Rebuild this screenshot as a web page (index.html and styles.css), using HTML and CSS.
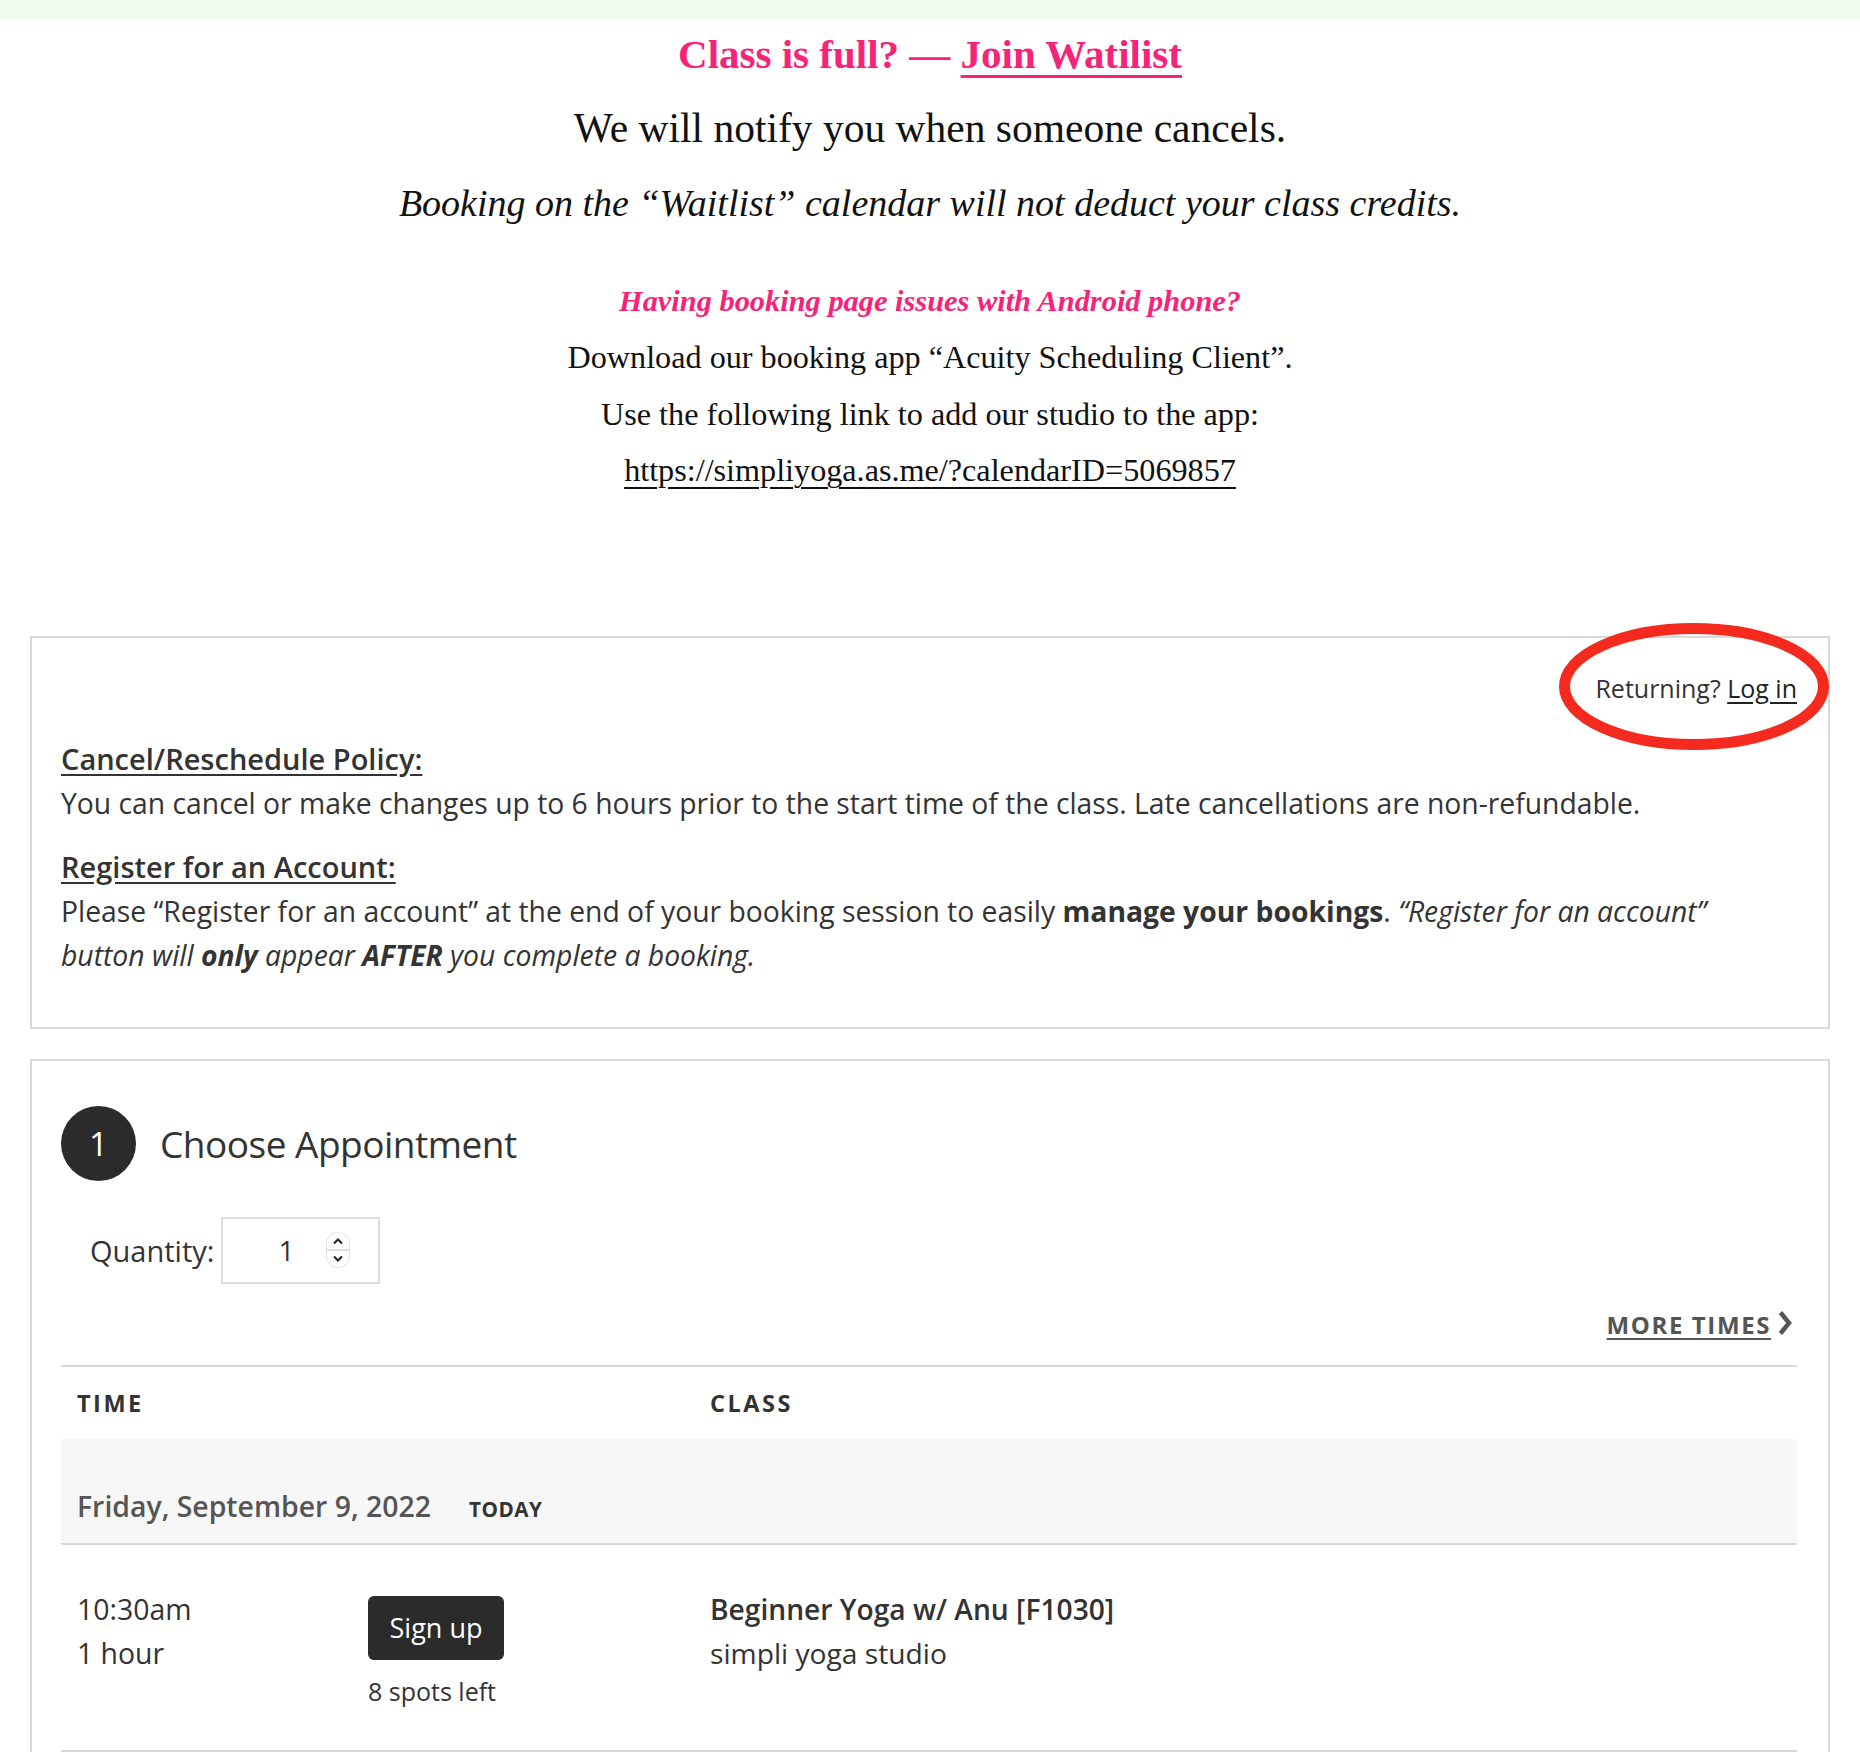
FILE: index.html
```html
<!DOCTYPE html>
<html lang="en">
<head>
<meta charset="utf-8">
<title>Simpli Yoga – Booking</title>
<link rel="stylesheet" href="styles.css">
</head>
<body>
<div class="topband"></div>
<header class="notice">
  <h1 class="full">Class is full? — <a href="#">Join Watilist</a></h1>
  <p class="notify">We will notify you when someone cancels.</p>
  <p class="credits">Booking on the “Waitlist” calendar will not deduct your class credits.</p>
  <p class="android">Having booking page issues with Android phone?</p>
  <p class="app">Download our booking app “Acuity Scheduling Client”.</p>
  <p class="app">Use the following link to add our studio to the app:</p>
  <p class="app"><a href="#">https://simpliyoga.as.me/?calendarID=5069857</a></p>
</header>

<section class="panel intro">
  <div class="returning">Returning? <a href="#">Log in</a>
    <svg class="ring" width="270" height="127" viewBox="0 0 270 127"><ellipse cx="135" cy="63.5" rx="129.5" ry="58" fill="none" stroke="#f42a1e" stroke-width="11"/></svg>
  </div>
  <h3 class="policy-title">Cancel/Reschedule Policy:</h3>
  <p class="policy-text">You can cancel or make changes up to 6 hours prior to the start time of the class. Late cancellations are non-refundable.</p>
  <h3 class="policy-title second">Register for an Account:</h3>
  <p class="policy-text">Please “Register for an account” at the end of your booking session to easily <b class="bold">manage your bookings</b>. <i class="it">“Register for an account”</i> <i class="it">button will</i> <b class="bold-it">only</b> <i class="it">appear</i> <b class="bold-it">AFTER</b> <i class="it">you complete a booking.</i></p>
</section>

<section class="panel step">
  <div class="step-head">
    <span class="step-num">1</span>
    <h2 class="step-title">Choose Appointment</h2>
  </div>
  <div class="qty">
    <label class="qty-label">Quantity:</label>
    <div class="qty-box">
      <span class="qty-val">1</span>
      <span class="spinner">
        <svg width="24" height="36" viewBox="0 0 24 36"><rect x="0.5" y="0.5" width="23" height="35" rx="11" fill="#fff" stroke="#e2e2e2"/><line x1="1" y1="18" x2="23" y2="18" stroke="#d6d6d6" stroke-width="1.5"/><path d="M8 11.5 L12 7.5 L16 11.5" fill="none" stroke="#222" stroke-width="2"/><path d="M8 24.5 L12 28.5 L16 24.5" fill="none" stroke="#222" stroke-width="2"/></svg>
      </span>
    </div>
  </div>
  <div class="more-row">
    <a class="more" href="#">MORE TIMES</a>
    <svg class="chev" width="16" height="26" viewBox="0 0 16 26"><path d="M3.5 2.5 L12 13 L3.5 23.5" fill="none" stroke="#555" stroke-width="4.5"/></svg>
  </div>
  <div class="table">
    <div class="thead">
      <div class="th th-time">TIME</div>
      <div class="th th-class">CLASS</div>
    </div>
    <div class="day">
      <span class="day-date">Friday, September 9, 2022</span>
      <span class="day-today">TODAY</span>
    </div>
    <div class="row">
      <div class="cell-time">
        <div class="time">10:30am<br>1 hour</div>
        <div class="signup">
          <button class="btn">Sign up</button>
          <div class="spots">8 spots left</div>
        </div>
      </div>
      <div class="cell-class">
        <div class="class-name">Beginner Yoga w/ Anu [F1030]</div>
        <div class="class-loc">simpli yoga studio</div>
      </div>
    </div>
  </div>
</section>
</body>
</html>
```

FILE: styles.css
```css
* { box-sizing: border-box; }
html, body { margin: 0; padding: 0; background: #fff; }
body { font-family: "Open Sans", "Liberation Sans", sans-serif; color: #333; }

.topband { height: 19px; background: #edfcee; }

.notice { text-align: center; font-family: "Liberation Serif", serif; color: #111; }
.notice p, .notice h1 { margin: 0; }
.full { font-size: 41px; line-height: 70px; margin-top: 6px; color: #f72379; font-weight: bold; }
.full a { color: #f72379; text-decoration: underline; text-decoration-thickness: 3px; text-underline-offset: 7px; }
.notice .notify { font-size: 41.5px; line-height: 60px; margin-top: 9px; }
.notice .credits { font-size: 38px; line-height: 60px; margin-top: 15px; font-style: italic; }
.notice .android { font-size: 30.4px; line-height: 56px; margin-top: 40px; font-style: italic; font-weight: bold; color: #f72379; }
.notice .app { font-size: 32.2px; line-height: 56.5px; }
.notice .app a { color: #111; text-decoration: underline; text-decoration-thickness: 2px; text-underline-offset: 6px; }

.panel { margin: 0 30px; border: 2px solid #d9d9d9; }
.intro { margin-top: 137px; padding: 30px 31px 50px 29px; }
.returning { position: relative; text-align: right; font-size: 25px; line-height: 40px; color: #333; }
.returning a { color: #222; text-decoration: underline; text-underline-offset: 4px; }
.ring { position: absolute; right: -32px; top: -45px; pointer-events: none; }

.policy-title { margin: 29px 0 0; font-size: 29px; line-height: 44px; font-weight: 600; color: #333; text-decoration: underline; text-underline-offset: 4px; }
.policy-title.second { margin-top: 20px; }
.policy-text { margin: 0; font-size: 28.3px; line-height: 44px; color: #333; }
.policy-text .bold { font-weight: 700; }
.policy-text .it { font-style: italic; }
.policy-text .bold-it { font-weight: 700; font-style: italic; }

.step { margin-top: 30px; padding: 45px 31px 0 29px; border-bottom: none; }
.step-head { display: flex; align-items: center; gap: 24px; }
.step-num { width: 75px; height: 75px; border-radius: 50%; background: #2b2b2b; color: #fff; display: flex; align-items: center; justify-content: center; font-size: 33px; }
.step-title { margin: 0; font-size: 37px; font-weight: 400; color: #333; letter-spacing: -0.5px; }

.qty { display: flex; align-items: center; margin-top: 36px; padding-left: 29px; gap: 7px; }
.qty-label { font-size: 29px; color: #333; }
.qty-box { width: 159px; height: 67px; border: 2px solid #dcdcdc; display: flex; align-items: center; padding-left: 55px; gap: 32px; }
.qty-val { font-size: 28px; color: #333; }
.spinner { display: flex; }

.more-row { display: flex; justify-content: flex-end; align-items: center; gap: 6px; margin-top: 24px; padding-right: 4px; }
.more { font-size: 24px; font-weight: 700; letter-spacing: 1.6px; color: #555; text-decoration: underline; text-underline-offset: 4px; line-height: 34px; }
.chev { margin-bottom: 4px; }

.table { margin-top: 23px; border-top: 2px solid #d8d8d8; }
.thead { display: flex; height: 72px; align-items: center; }
.th { font-size: 23.5px; font-weight: 700; letter-spacing: 2.5px; color: #333; padding-left: 16px; }
.th-time { width: 633px; }
.day { background: #f7f7f7; padding: 46px 16px 16px; border-bottom: 2px solid #d8d8d8; display: flex; align-items: baseline; gap: 38px; }
.day-date { font-size: 28.4px; font-weight: 600; color: #555; line-height: 42px; }
.day-today { font-size: 20.7px; font-weight: 700; color: #333; letter-spacing: 0.5px; }

.row { display: flex; padding: 42px 0 42px; border-bottom: 2px solid #d8d8d8; }
.cell-time { width: 633px; display: flex; padding-left: 16px; }
.time { width: 291px; font-size: 28.4px; line-height: 44px; color: #333; }
.signup { display: flex; flex-direction: column; align-items: flex-start; width: 160px; }
.btn { width: 136px; height: 64px; margin-top: 9px; background: #2b2b2b; color: #fff; border: none; border-radius: 6px; font-family: inherit; font-size: 27px; padding: 0; }
.spots { margin-top: 14px; font-size: 25px; color: #333; line-height: 34px; white-space: nowrap; }
.cell-class { padding-left: 16px; }
.class-name { font-size: 28.2px; font-weight: 600; line-height: 44px; color: #333; }
.class-loc { font-size: 28.2px; line-height: 44px; color: #333; }
```
